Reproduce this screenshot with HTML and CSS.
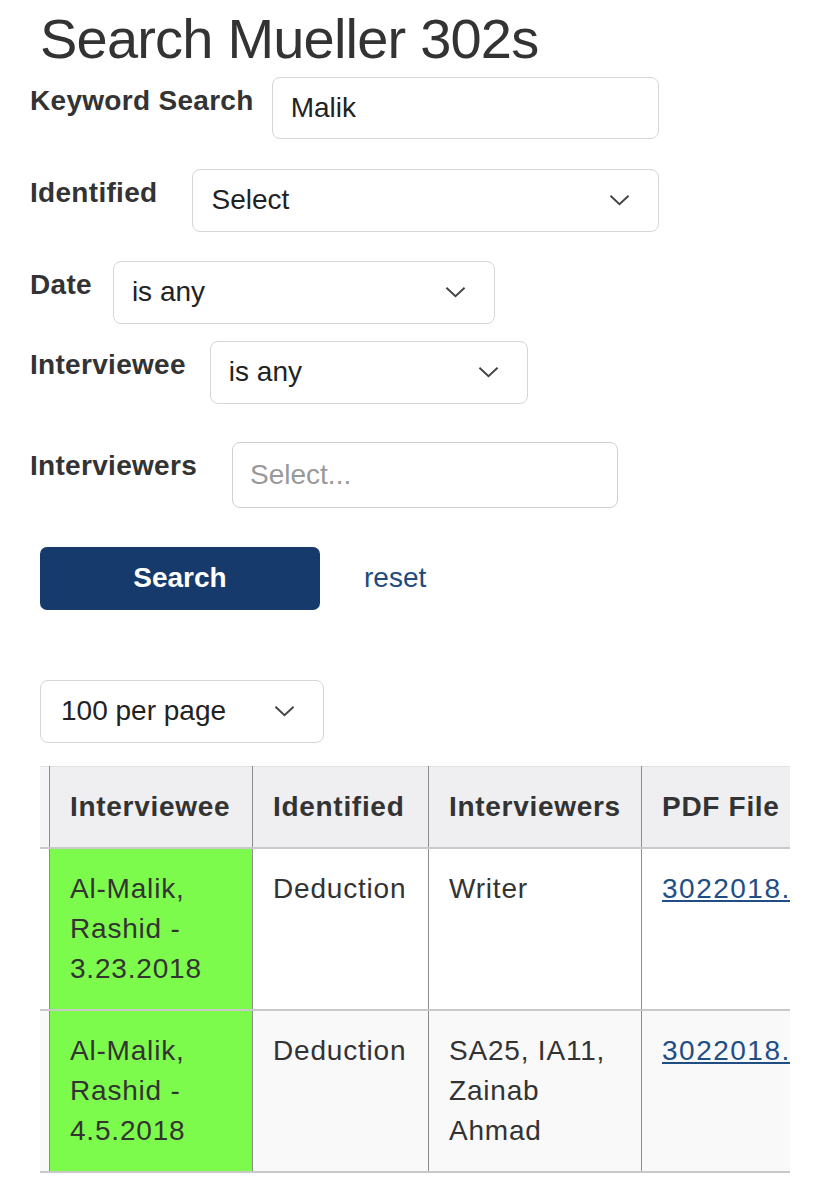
FILE: index.html
```html
<!DOCTYPE html>
<html lang="en">
<head>
    <meta charset="UTF-8">
    <meta name="viewport" content="width=device-width, initial-scale=1.0">
    <title>Search Mueller 302s</title>
    <link rel="stylesheet" href="styles.css">
</head>
<body>

    <div class="container">
        <h1>Search Mueller 302s</h1>

        <form class="search-form">
            <div class="form-row row-keyword">
                <label for="keyword">Keyword Search</label>
                <input type="text" id="keyword" class="field field-keyword" value="Malik">
            </div>

            <div class="form-row row-identified">
                <label>Identified</label>
                <div class="field select-box field-identified">
                    <span>Select</span>
                    <svg class="chevron" viewBox="0 0 22 12"><polyline points="1.5,1.5 11,10.5 20.5,1.5"/></svg>
                </div>
            </div>

            <div class="form-row row-date">
                <label>Date</label>
                <div class="field select-box field-date">
                    <span>is any</span>
                    <svg class="chevron" viewBox="0 0 22 12"><polyline points="1.5,1.5 11,10.5 20.5,1.5"/></svg>
                </div>
            </div>

            <div class="form-row row-interviewee">
                <label>Interviewee</label>
                <div class="field select-box field-interviewee">
                    <span>is any</span>
                    <svg class="chevron" viewBox="0 0 22 12"><polyline points="1.5,1.5 11,10.5 20.5,1.5"/></svg>
                </div>
            </div>

            <div class="form-row row-interviewers">
                <label for="interviewers">Interviewers</label>
                <input type="text" id="interviewers" class="field field-interviewers" placeholder="Select...">
            </div>

            <div class="actions">
                <button type="button" class="search-btn">Search</button>
                <a href="#" class="reset-link">reset</a>
            </div>
        </form>

        <div class="field select-box per-page">
            <span>100 per page</span>
            <svg class="chevron" viewBox="0 0 22 12"><polyline points="1.5,1.5 11,10.5 20.5,1.5"/></svg>
        </div>

        <div class="table-wrap">
            <table class="results">
                <thead>
                    <tr>
                        <th class="col-cut"></th>
                        <th class="col-interviewee">Interviewee</th>
                        <th class="col-identified">Identified</th>
                        <th class="col-interviewers">Interviewers</th>
                        <th class="col-pdf">PDF File</th>
                    </tr>
                </thead>
                <tbody>
                    <tr>
                        <td class="col-cut"></td>
                        <td class="match">Al-Malik,<br>Rashid -<br>3.23.2018</td>
                        <td>Deduction</td>
                        <td>Writer</td>
                        <td><a href="#">3022018.</a></td>
                    </tr>
                    <tr>
                        <td class="col-cut"></td>
                        <td class="match">Al-Malik,<br>Rashid -<br>4.5.2018</td>
                        <td>Deduction</td>
                        <td>SA25, IA11,<br>Zainab<br>Ahmad</td>
                        <td><a href="#">3022018.</a></td>
                    </tr>
                </tbody>
            </table>
        </div>
    </div>

</body>
</html>
```

FILE: styles.css
```css
body {
    font-family: "Liberation Sans", Arial, sans-serif;
    background-color: white;
    color: #333;
    margin: 0;
    padding: 0;
}
.container {
    padding: 0 30px;
}
h1 {
    font-size: 56px;
    font-weight: normal;
    letter-spacing: -0.8px;
    line-height: 1.1;
    color: #333;
    margin: 8px 0 0 10px;
}
.search-form {
    margin-top: 7px;
}
.form-row {
    display: flex;
    align-items: flex-start;
}
.form-row label {
    font-size: 28px;
    font-weight: bold;
    letter-spacing: 0.3px;
    line-height: 34px;
    padding-top: 7px;
    margin-right: 21px;
    color: #333;
}
.row-keyword label {
    margin-right: 18px;
}
.row-identified {
    margin-top: 30px;
}
.row-identified label,
.row-interviewers label {
    margin-right: 35px;
}
.row-date {
    margin-top: 29px;
}
.row-interviewee {
    margin-top: 17px;
}
.row-interviewee label {
    margin-right: 24px;
}
.row-interviewers {
    margin-top: 38px;
}
.field {
    box-sizing: border-box;
    height: 63px;
    padding: 0 18px;
    border: 1px solid #d6d6d6;
    border-radius: 8px;
    background: white;
    font-family: inherit;
    font-size: 28px;
    color: #222;
    outline: none;
}
.select-box {
    display: flex;
    align-items: center;
    justify-content: space-between;
    padding-right: 28px;
}
.chevron {
    width: 21px;
    height: 12px;
    fill: none;
    stroke: #444;
    stroke-width: 2;
}
.field-keyword {
    width: 387px;
    height: 62px;
}
.field-identified {
    width: 467px;
}
.field-date {
    width: 382px;
}
.field-interviewee {
    width: 318px;
}
.field-interviewers {
    width: 386px;
    height: 66px;
    padding-left: 17px;
    border-color: #d0d0d0;
}
.field-interviewers::placeholder {
    color: #999;
}
.actions {
    display: flex;
    align-items: center;
    gap: 44px;
    margin: 39px 0 0 10px;
}
.search-btn {
    width: 280px;
    height: 63px;
    background-color: #163a6b;
    color: white;
    border: none;
    border-radius: 7px;
    font-family: inherit;
    font-size: 28px;
    font-weight: bold;
    cursor: pointer;
}
.reset-link {
    font-size: 28px;
    color: #1d4a80;
    text-decoration: none;
}
.per-page {
    width: 284px;
    margin: 70px 0 0 10px;
    padding-left: 20px;
}
.table-wrap {
    width: 750px;
    margin: 23px 0 0 10px;
    overflow: hidden;
}
.results {
    border-collapse: collapse;
    table-layout: fixed;
    width: 961px;
    font-size: 28px;
}
.results th, .results td {
    padding: 20px;
    text-align: left;
    vertical-align: top;
    line-height: 40px;
    letter-spacing: 0.8px;
    border-right: 1px solid #8c8c8c;
    border-bottom: 2px solid #c9c9c9;
}
.results th {
    background-color: #efeff1;
    font-weight: bold;
    height: 39px;
    vertical-align: middle;
    letter-spacing: 0.7px;
    color: #333;
    border-top: 1px solid #e2e2e2;
}
.results .col-cut {
    width: 9px;
    padding: 0;
}
.results th.col-cut {
    background-color: #f4f4f6;
}
.col-interviewee {
    width: 162px;
}
.col-identified {
    width: 135px;
}
.col-interviewers {
    width: 172px;
}
.col-pdf {
    width: 400px;
}
.results tbody tr:nth-child(even) {
    background-color: #f9f9f9;
}
.results td.match {
    background-color: #7dfb4c;
}
.results td a {
    color: #1f4e85;
    letter-spacing: 1.5px;
    white-space: nowrap;
}
```
